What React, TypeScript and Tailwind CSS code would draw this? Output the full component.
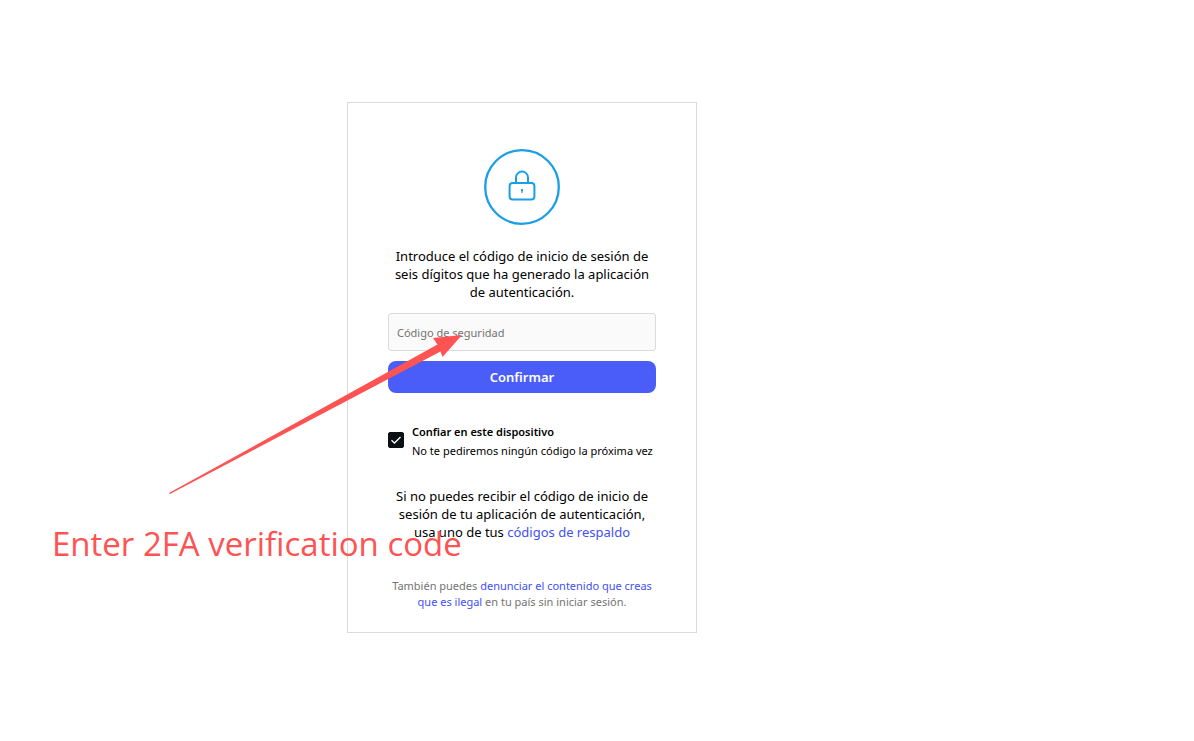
import React, { useState } from "react";

function LockIcon() {
  return (
    <svg className="w-[76px] h-[76px]" viewBox="0 0 76 76" fill="none" stroke="#1a9fe6" aria-hidden="true">
      <circle cx="38" cy="38" r="36.8" strokeWidth="2.3" />
      <rect x="25.6" y="34" width="24.8" height="16.4" rx="3" strokeWidth="2" />
      <path d="M32 34V28.6a6 6 0 0 1 12 0V34" strokeWidth="2" />
      <path d="M38 40v2.4" strokeWidth="2" />
      <path d="M38 42.4v1.6" strokeWidth="1.2" />
    </svg>
  );
}

function Arrow() {
  return (
    <svg
      className="absolute top-[230px] -left-[180px] w-[296px] h-[164px] pointer-events-none"
      viewBox="0 0 296 164"
      fill="#fe5353"
      aria-hidden="true"
    >
      <path d="M1 160L269.5 11.5L265 5L294 2L274.5 24L272.5 18.5L2 161Z" />
    </svg>
  );
}

export default function App() {
  const [code, setCode] = useState("");
  const [trusted, setTrusted] = useState(true);

  return (
    <main className="min-h-screen bg-white flex justify-center items-start pt-[102px] pr-[150px] overflow-hidden font-['Noto_Sans','Open_Sans',sans-serif] text-black">
      <section className="relative w-[350px] shrink-0 border border-[#dbdbdb] px-10 pt-[46px] pb-[22px]">
        <form className="flex flex-col" onSubmit={(e) => e.preventDefault()}>
          <div className="flex justify-center">
            <LockIcon />
          </div>

          <p className="mt-[22px] text-[13px] leading-[18px] text-center whitespace-nowrap">
            Introduce el código de inicio de sesión de
            <br />
            seis dígitos que ha generado la aplicación
            <br />
            de autenticación.
          </p>

          <input
            type="text"
            inputMode="numeric"
            aria-label="Código de seguridad"
            placeholder="Código de seguridad"
            value={code}
            onChange={(e) => setCode(e.target.value)}
            className="mt-3 h-[38px] w-full rounded-[3px] border border-[#dbdbdb] bg-[#fafafa] px-2 text-[11px] placeholder:text-[#737373]"
          />
          <button type="submit" className="mt-[10px] h-8 w-full rounded-lg bg-[#4a5df9] pt-0.5 text-[13px] font-semibold text-white">
            Confirmar
          </button>

          <label className="mt-[29px] flex items-start gap-2 whitespace-nowrap">
            <span className="relative mt-[10px] flex size-4 shrink-0">
              <input
                type="checkbox"
                checked={trusted}
                onChange={(e) => setTrusted(e.target.checked)}
                className="peer size-4 appearance-none rounded-[2px] border border-[#0c1014] checked:bg-[#0c1014]"
              />
              <svg className="absolute inset-0 size-4 hidden peer-checked:block pointer-events-none" viewBox="0 0 16 16" fill="none" stroke="white" strokeWidth="1.3" aria-hidden="true">
                <path d="M3.5 8.2l3 2.8 6-6" />
              </svg>
            </span>
            <span className="flex flex-col text-[11px] leading-[19px]">
              <span className="font-semibold">Confiar en este dispositivo</span>
              <span>No te pediremos ningún código la próxima vez</span>
            </span>
          </label>
        </form>

        <p className="mt-[27px] text-[13px] leading-[18px] text-center whitespace-nowrap">
          Si no puedes recibir el código de inicio de
          <br />
          sesión de tu aplicación de autenticación,
          <br />
          usa uno de tus <a href="#respaldo" className="text-[#4150f7]">códigos de respaldo</a>
        </p>

        <p className="mt-[37px] text-[11px] leading-4 text-center text-[#737373] whitespace-nowrap">
          También puedes{" "}
          <a href="#denunciar" className="text-[#4150f7]">
            denunciar el contenido que creas
            <br />
            que es ilegal
          </a>{" "}
          en tu país sin iniciar sesión.
        </p>

        {/* Callout over the form */}
        <Arrow />
        <p className="absolute top-[419px] -left-[296px] font-['Open_Sans','Noto_Sans',sans-serif] text-[33px] leading-[44px] text-[#fe5353] whitespace-nowrap pointer-events-none">
          Enter 2FA verification code
        </p>
      </section>
    </main>
  );
}
